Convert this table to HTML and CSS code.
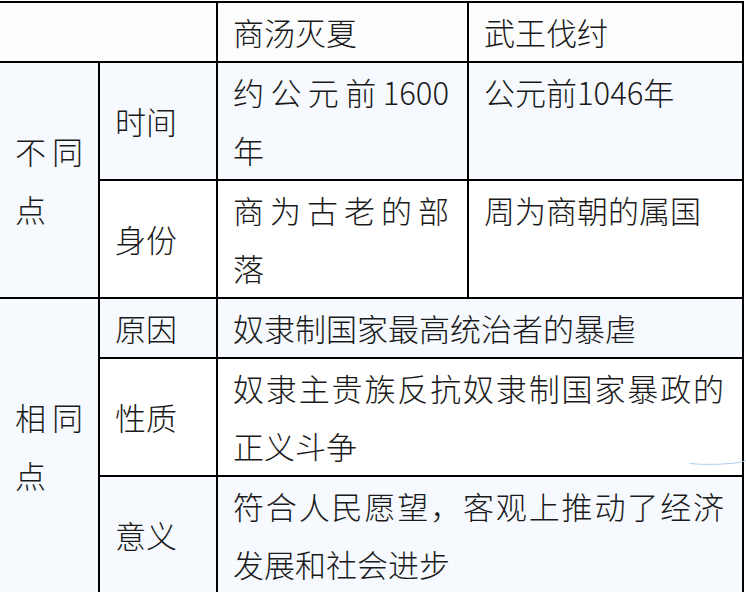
FILE: index.html
```html
<!DOCTYPE html>
<html lang="zh-CN">
<head>
<meta charset="utf-8">
<title>商汤灭夏与武王伐纣</title>
<link rel="stylesheet" href="styles.css">
</head>
<body>
<div class="wrap">
<table class="cmp">
  <colgroup>
    <col class="c1"><col class="c2"><col class="c3"><col class="c4">
  </colgroup>
  <tr class="head">
    <td colspan="2"></td>
    <td class="narrow">商汤灭夏</td>
    <td>武王伐纣</td>
  </tr>
  <tr class="tint">
    <td rowspan="2" class="group">不同点</td>
    <td class="tall">时间</td>
    <td class="narrow">约公元前1600年</td>
    <td class="top">公元前1046年</td>
  </tr>
  <tr class="plain">
    <td class="tall">身份</td>
    <td class="narrow">商为古老的部落</td>
    <td class="top">周为商朝的属国</td>
  </tr>
  <tr class="tint">
    <td rowspan="3" class="group">相同点</td>
    <td>原因</td>
    <td colspan="2" class="wide">奴隶制国家最高统治者的暴虐</td>
  </tr>
  <tr class="plain">
    <td class="tall">性质</td>
    <td colspan="2" class="wide">奴隶主贵族反抗奴隶制国家暴政的正义斗争</td>
  </tr>
  <tr class="tint">
    <td class="tall">意义</td>
    <td colspan="2" class="wide">符合人民愿望，客观上推动了经济发展和社会进步</td>
  </tr>
</table>
<svg class="stroke" width="60" height="12" viewBox="0 0 60 12">
  <path d="M2 7.5 C 14 9, 30 8.5, 42 7.5 S 54 5.5, 59 4.5" fill="none" stroke="#b3cdf0" stroke-width="1" stroke-linecap="round"/>
</svg>
</div>
</body>
</html>
```

FILE: styles.css
```css
html, body {
  margin: 0;
  padding: 0;
  background: #ffffff;
}
body {
  overflow: hidden;
  height: 592px;
}
.wrap {
  position: relative;
  padding-top: 1px;
}
.cmp {
  margin-left: -2px;
  border-collapse: collapse;
  table-layout: fixed;
  width: 746px;
  font-family: "Noto Sans CJK SC", "Noto Sans", sans-serif;
  font-size: 31px;
  font-weight: 300;
  color: #1a1a1a;
}
.c1 { width: 100px; }
.c2 { width: 118px; }
.c3 { width: 251px; }
.c4 { width: 275px; }
.cmp td {
  border: 2px solid #000;
  padding: 0 15px;
  line-height: 58px;
  height: 58px;
  text-align: justify;
  vertical-align: middle;
  word-break: break-all;
}
.cmp td.tall { height: 116px; }
.cmp td.top { vertical-align: top; }
.cmp td.narrow { padding-right: 18px; }
.cmp td.wide { padding-right: 18px; }
.cmp td.group { background: #f6f9fe; }
.head td { background: #fdfdfd; }
.tint td { background: #f6f9fe; }
.plain td { background: #ffffff; }
.stroke {
  position: absolute;
  left: 688px;
  top: 456px;
}
```
